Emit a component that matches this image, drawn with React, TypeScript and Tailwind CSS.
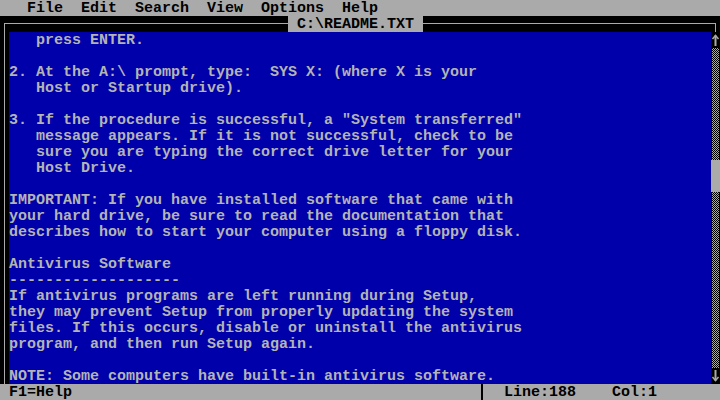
import React from "react";

const lines: string[] = [
  "   press ENTER.",
  "",
  "2. At the A:\\ prompt, type:  SYS X: (where X is your",
  "   Host or Startup drive).",
  "",
  '3. If the procedure is successful, a "System transferred"',
  "   message appears. If it is not successful, check to be",
  "   sure you are typing the correct drive letter for your",
  "   Host Drive.",
  "",
  "IMPORTANT: If you have installed software that came with",
  "your hard drive, be sure to read the documentation that",
  "describes how to start your computer using a floppy disk.",
  "",
  "Antivirus Software",
  "-------------------",
  "If antivirus programs are left running during Setup,",
  "they may prevent Setup from properly updating the system",
  "files. If this occurs, disable or uninstall the antivirus",
  "program, and then run Setup again.",
  "",
  "NOTE: Some computers have built-in antivirus software.",
];

const Arrow = ({ down }: { down?: boolean }) => (
  <svg width="9" height="16" viewBox="0 0 9 16" className={down ? "rotate-180" : ""}>
    <path d="M4.5 3.5V14" stroke="#aaaaaa" strokeWidth="2" />
    <path d="M1.5 7L4.5 3.5L7.5 7" stroke="#aaaaaa" strokeWidth="1.5" fill="none" />
  </svg>
);

// dotted scroll track (light shade)
const Track = ({ className }: { className: string }) => (
  <div
    className={`${className} mx-[1px] bg-[conic-gradient(#aaaaaa_25%,transparent_0_50%,#aaaaaa_0_75%,transparent_0)] bg-size-[2px_2px]`}
  />
);

export default function App() {
  return (
    <div className="w-[720px] h-[400px] bg-black flex flex-col overflow-hidden font-['Liberation_Mono',monospace] text-[15px] leading-[15px] font-bold">
      {/* menu bar */}
      <div className="h-4 pt-px shrink-0 bg-[#aaaaaa] text-black whitespace-pre">
        {"   File  Edit  Search  View  Options  Help"}
      </div>

      {/* window top border + title */}
      <div className="h-4 shrink-0 flex px-[4px]">
        <div className="w-[284px] mt-[7px] border-l border-t border-[#aaaaaa]" />
        <div className="w-[135px] pt-px bg-[#aaaaaa] text-black whitespace-pre">
          {" C:\\README.TXT "}
        </div>
        <div className="flex-1 mt-[7px] border-r border-t border-[#aaaaaa]" />
      </div>

      {/* editor area */}
      <div className="flex-1 flex min-h-0">
        <div className="w-[9px] shrink-0">
          <div className="ml-[4px] h-full border-l border-[#aaaaaa]" />
        </div>
        <div className="flex-1 bg-[#0000aa] text-[#b4b4b4] whitespace-pre">
          {lines.map((l, i) => (
            <div key={i} className="h-4 pt-px">
              {l}
            </div>
          ))}
        </div>
        <div className="w-[9px] shrink-0 flex flex-col">
          <Arrow />
          <Track className="h-[112px]" />
          <div className="h-8 bg-[#aaaaaa]" />
          <Track className="flex-1" />
          <Arrow down />
        </div>
      </div>

      {/* status bar */}
      <div className="h-4 shrink-0 bg-[#aaaaaa] text-black whitespace-pre flex">
        <div className="w-[477px] pt-px">{" F1=Help"}</div>
        <div className="w-[9px] flex justify-center">
          <div className="w-[2px] h-full bg-black" />
        </div>
        <div className="pt-px">{"  Line:188    Col:1"}</div>
      </div>
    </div>
  );
}
